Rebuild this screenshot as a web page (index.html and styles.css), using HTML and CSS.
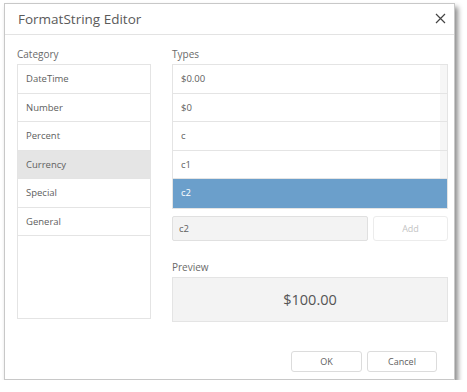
FILE: index.html
```html
<!DOCTYPE html>
<html>
<head>
  <title>FormatString Editor</title>
  <meta name="viewport" content="width=device-width, initial-scale=1">
  <link rel="stylesheet" href="styles.css">
</head>
<body>
  <div class="dialog">
    <div class="dialog-header">
      <span class="dialog-title">FormatString Editor</span>
      <svg class="close" width="11" height="11" viewBox="0 0 11 11">
        <path d="M1 1 L10 10 M10 1 L1 10" stroke="#444" stroke-width="1.2" fill="none"/>
      </svg>
    </div>

    <div class="dialog-body">
      <div class="col-left">
        <div class="field-label">Category</div>
        <div class="list category-list">
          <div class="list-item">DateTime</div>
          <div class="list-item">Number</div>
          <div class="list-item">Percent</div>
          <div class="list-item hovered">Currency</div>
          <div class="list-item">Special</div>
          <div class="list-item">General</div>
        </div>
      </div>

      <div class="col-right">
        <div class="field-label">Types</div>
        <div class="list types-list">
          <div class="list-item track">$0.00</div>
          <div class="list-item track">$0</div>
          <div class="list-item track">c</div>
          <div class="list-item track">c1</div>
          <div class="list-item selected">c2</div>
        </div>

        <div class="add-row">
          <div class="text-input">c2</div>
          <div class="btn disabled">Add</div>
        </div>

        <div class="field-label preview-label">Preview</div>
        <div class="preview">$100.00</div>
      </div>
    </div>

    <div class="dialog-footer">
      <div class="btn">OK</div>
      <div class="btn">Cancel</div>
    </div>
  </div>
</body>
</html>
```

FILE: styles.css
```css
body {
  margin: 0;
  background: #fff;
  font-family: "Open Sans", "Noto Sans", sans-serif;
  color: #555;
}
.dialog {
  margin: 3px 0 0 4px;
  width: 451px;
  height: 377px;
  box-sizing: border-box;
  border: 1px solid #c8c8c8;
  background: #fff;
  box-shadow: 3px 4px 5px rgba(0, 0, 0, 0.45);
  display: flex;
  flex-direction: column;
}
.dialog-header {
  height: 31px;
  box-sizing: border-box;
  border-bottom: 1px solid #e3e3e3;
  display: flex;
  align-items: center;
  justify-content: space-between;
  padding: 0 8px 0 13px;
}
.dialog-title {
  font-size: 13.5px;
  color: #5a5a5a;
}
.close {
  margin-top: -2px;
}
.dialog-body {
  display: flex;
  gap: 21px;
  padding: 12px 6px 0 12px;
}
.col-left {
  width: 135px;
}
.col-right {
  width: 276px;
}
.field-label {
  font-size: 10px;
  height: 17px;
  line-height: 15px;
  color: #6a6a6a;
}
.list {
  border: 1px solid #e4e4e4;
  box-sizing: border-box;
}
.category-list {
  height: 255px;
}
.list-item {
  height: 28.5px;
  box-sizing: border-box;
  border-bottom: 1px solid #e4e4e4;
  font-size: 9.5px;
  line-height: 27px;
  padding-left: 8px;
  color: #606060;
}
.list-item.hovered {
  background: #e5e5e5;
}
.list-item.track {
  background: linear-gradient(to left, #f6f6f6 7px, #fff 7px);
}
.list-item.selected {
  background: #6b9fcb;
  color: #fff;
  border-bottom: none;
}
.add-row {
  display: flex;
  gap: 5px;
  margin-top: 7px;
}
.text-input {
  width: 196px;
  height: 25px;
  box-sizing: border-box;
  border: 1px solid #e0e0e0;
  border-radius: 2px;
  background: #f3f3f3;
  font-size: 9.5px;
  line-height: 23px;
  padding-left: 6px;
  color: #606060;
}
.btn {
  width: 71px;
  height: 21px;
  box-sizing: border-box;
  border: 1px solid #dcdcdc;
  border-radius: 3px;
  background: #fff;
  font-size: 9px;
  line-height: 19px;
  text-align: center;
  color: #606060;
}
.add-row .btn {
  width: 75px;
  height: 25px;
  line-height: 23px;
  border-color: #ececec;
}
.btn.disabled {
  color: #c4c4c4;
}
.preview-label {
  margin-top: 19px;
}
.preview {
  height: 45px;
  box-sizing: border-box;
  border: 1px solid #e4e4e4;
  background: #f3f3f3;
  font-size: 14.5px;
  line-height: 43px;
  text-align: center;
  color: #555;
}
.dialog-footer {
  margin-top: auto;
  display: flex;
  justify-content: flex-end;
  gap: 5px;
  padding: 0 17px 7px 0;
}
.dialog-footer .btn:last-child {
  width: 70px;
}
```
